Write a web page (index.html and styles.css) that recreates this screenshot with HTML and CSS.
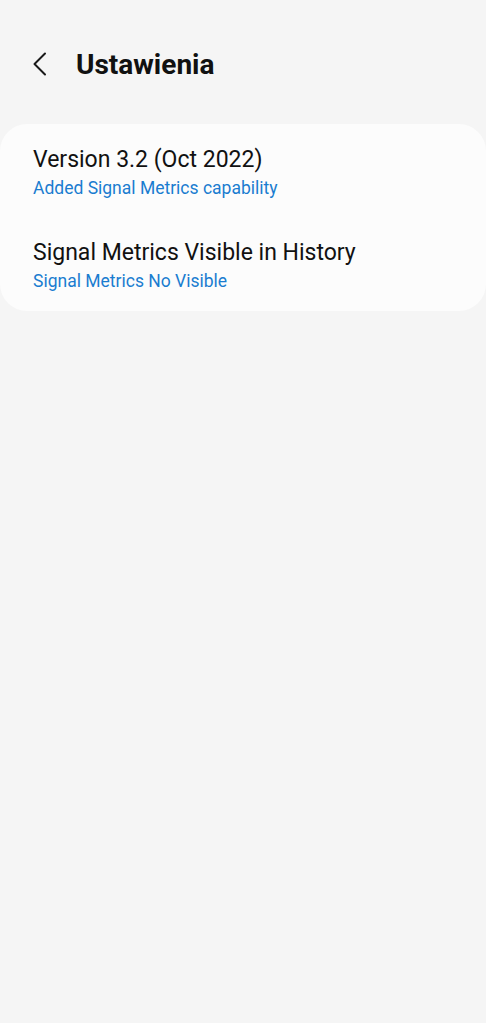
FILE: index.html
```html
<!DOCTYPE html>
<html lang="pl">
<head>
  <meta charset="UTF-8" />
  <meta name="viewport" content="width=device-width, initial-scale=1" />
  <title>Ustawienia</title>
  <link rel="stylesheet" href="styles.css">
</head>
<body>
  <header class="top-bar">
    <button class="back-btn" aria-label="Wstecz">
      <svg width="16" height="24" viewBox="0 0 16 24">
        <path d="M13 1.5 L2.5 12 L13 22.5" fill="none" stroke="#1a1a1a" stroke-width="2" stroke-linecap="round" stroke-linejoin="round"/>
      </svg>
    </button>
    <h1>Ustawienia</h1>
  </header>

  <section class="settings-card">
    <div class="setting-item">
      <div class="setting-title">Version 3.2 (Oct 2022)</div>
      <div class="setting-sub">Added Signal Metrics capability</div>
    </div>
    <div class="setting-item">
      <div class="setting-title">Signal Metrics Visible in History</div>
      <div class="setting-sub">Signal Metrics No Visible</div>
    </div>
  </section>
</body>
</html>
```

FILE: styles.css
```css
body {
  font-family: Roboto, 'Noto Sans', sans-serif;
  background: #f5f5f5;
  margin: 0;
  padding: 0;
  color: #111;
}

.top-bar {
  display: flex;
  align-items: center;
  height: 48px;
  padding: 40px 0 36px 32px;
}

.back-btn {
  background: none;
  border: none;
  padding: 0;
  width: 44px;
  height: 24px;
  display: flex;
  align-items: center;
  cursor: pointer;
}

h1 {
  margin: 0;
  font-size: 28px;
  font-weight: 700;
  color: #111;
}

.settings-card {
  background: #fcfcfc;
  border-radius: 27px;
  padding: 15px 0 11px;
}

.setting-item {
  padding: 4px 33px 8px;
  margin-bottom: 25px;
}

.setting-item:last-child {
  margin-bottom: 0;
}

.setting-title {
  font-size: 23px;
  line-height: 34px;
  color: #111;
}

.setting-sub {
  font-size: 17.5px;
  line-height: 22px;
  color: #1a7cd0;
}
```
